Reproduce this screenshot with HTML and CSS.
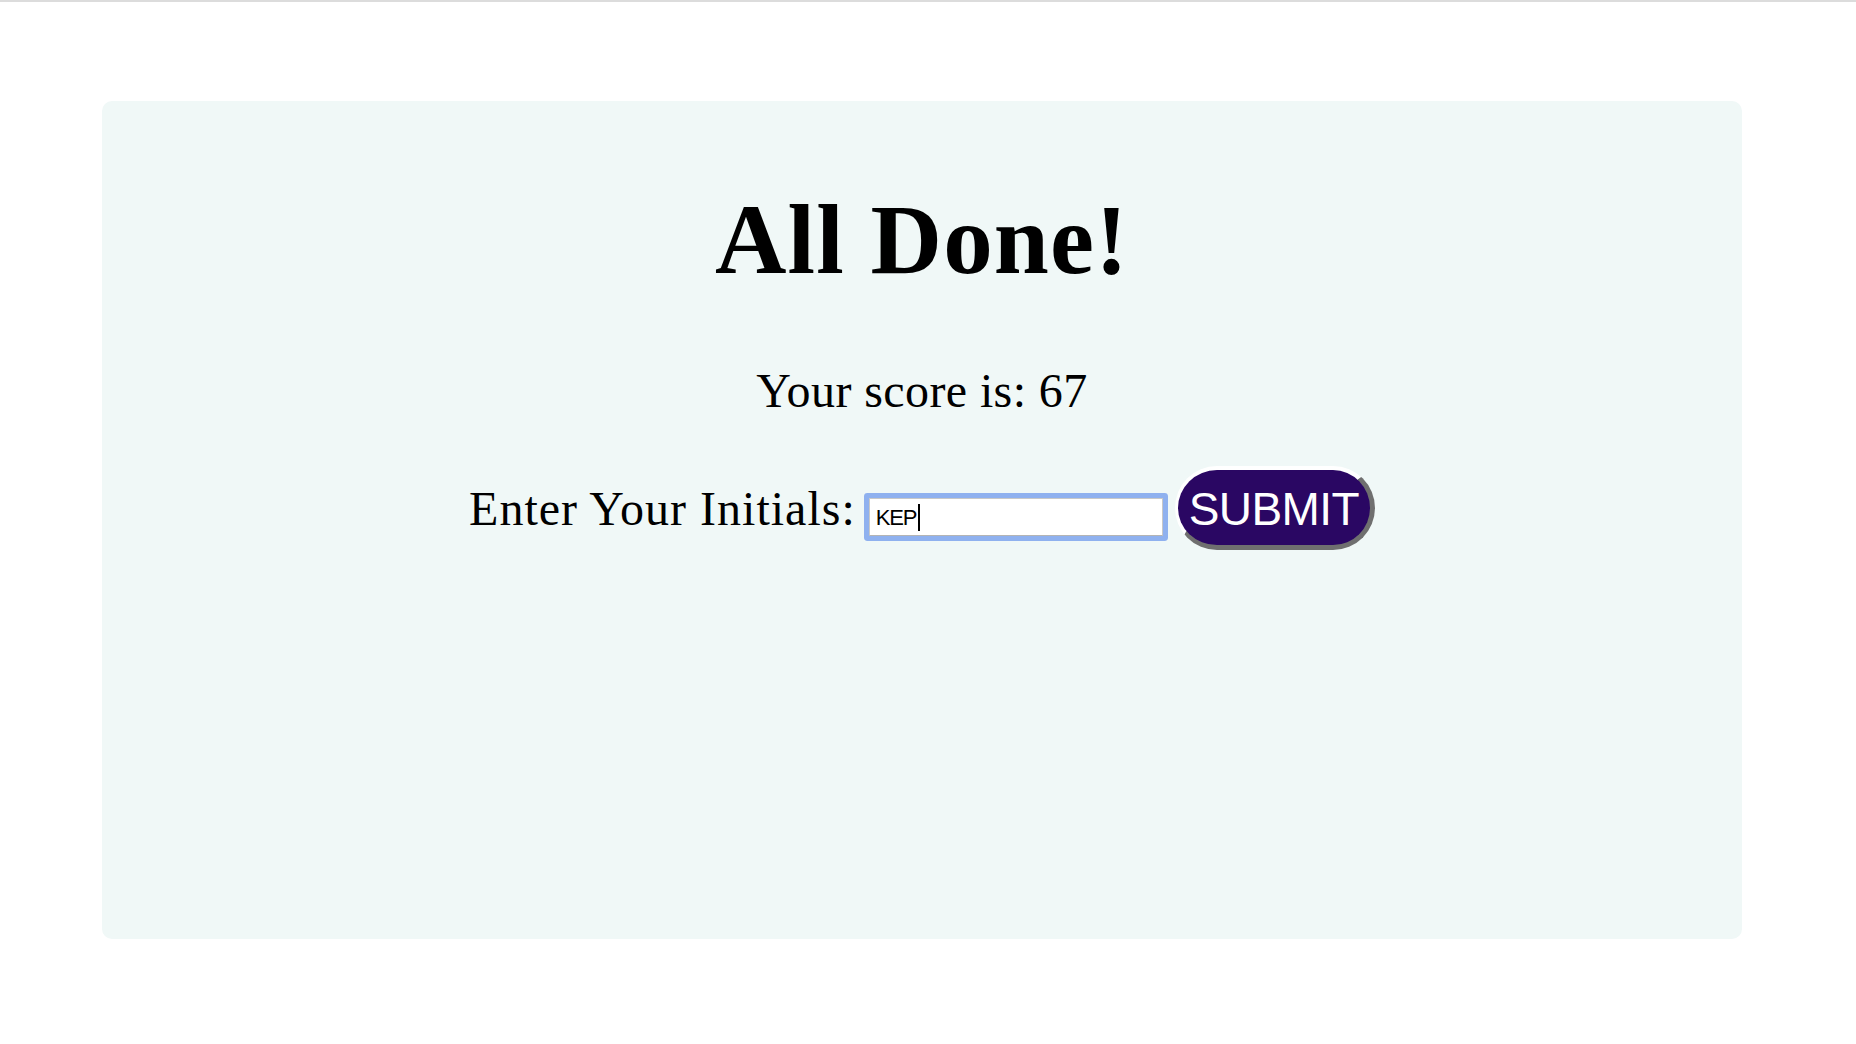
FILE: index.html
```html
<!DOCTYPE html>
<html lang="en">
<head>
<meta charset="utf-8">
<title>All Done!</title>
<link rel="stylesheet" href="styles.css">
</head>
<body>
<main class="card">
  <h1 class="title">All Done!</h1>
  <p class="score">Your score is: 67</p>
  <form class="initials-row">
    <label class="initials-label" for="initials">Enter Your Initials:</label>
    <span class="input-wrap"><input class="initials-input" id="initials" type="text" value="KEP"><span class="caret"></span></span>
    <button class="submit-btn" type="button">SUBMIT</button>
  </form>
</main>
</body>
</html>
```

FILE: styles.css
```css
html, body {
  margin: 0;
  padding: 0;
  background: #ffffff;
}

body {
  border-top: 2px solid #dcdcdc;
  font-family: "Liberation Serif", "Times New Roman", serif;
  color: #000;
}

.card {
  box-sizing: border-box;
  margin: 99px 0 0 102px;
  width: 1640px;
  height: 838px;
  background: #f0f8f7;
  border-radius: 10px;
  padding-top: 89px;
  display: flex;
  flex-direction: column;
  align-items: center;
}

.title {
  margin: 0;
  font-size: 99px;
  line-height: 1;
  font-weight: 700;
  letter-spacing: 1.1px;
}

.score {
  margin: 78px 0 0;
  font-size: 48px;
  line-height: 1;
  letter-spacing: 0.4px;
}

.initials-row {
  margin: 51px 0 0;
  display: flex;
  align-items: baseline;
  justify-content: center;
}

.initials-label {
  font-size: 48px;
  line-height: 1;
  letter-spacing: 1px;
  margin-right: 13px;
}

.input-wrap {
  position: relative;
  display: inline-flex;
}

.initials-input {
  box-sizing: border-box;
  width: 294px;
  height: 38px;
  margin: 0;
  padding: 3px 6px 0;
  border: 1px solid #c8c8c8;
  border-bottom-color: #b4b4b4;
  border-radius: 1px;
  background: #fff;
  font-family: "Liberation Sans", Arial, sans-serif;
  font-size: 22px;
  letter-spacing: -1.2px;
  color: #000;
  outline: none;
  box-shadow: 0 0 0 5px #8fb1ef;
}

.caret {
  position: absolute;
  left: 49px;
  top: 6px;
  width: 2px;
  height: 27px;
  background: #000;
}

.submit-btn {
  margin-left: 12px;
  padding: 16px 11px 13px 11px;
  border-style: solid;
  border-width: 4px 5px 5px 3px;
  border-color: #ffffff #6f6f6f #6f6f6f #ffffff;
  border-radius: 42px;
  background: #2a0763;
  color: #ffffff;
  font-family: "Liberation Sans", Arial, sans-serif;
  font-size: 46px;
  line-height: 1;
  letter-spacing: -0.6px;
  cursor: pointer;
}
```
